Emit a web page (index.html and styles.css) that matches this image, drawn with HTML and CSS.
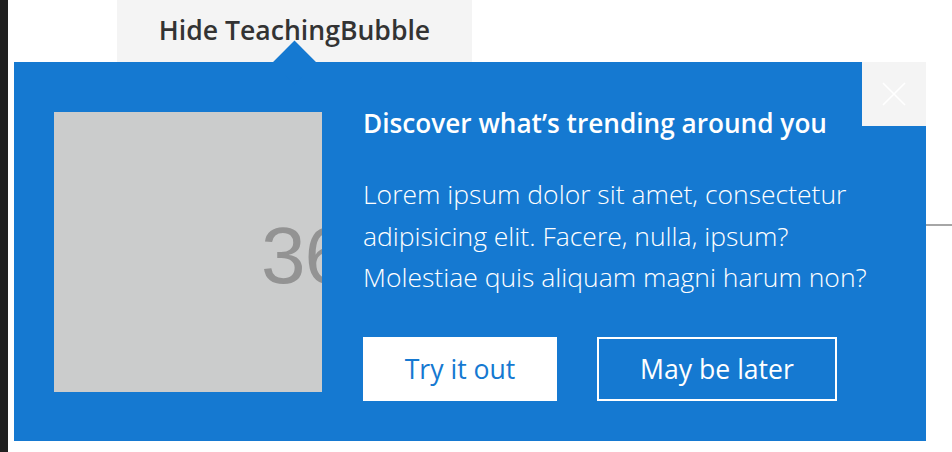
FILE: index.html
```html
<!DOCTYPE html>
<html lang="en">
  <head>
    <meta charset="UTF-8" />
    <meta name="viewport" content="width=device-width, initial-scale=1.0" />
    <title>TeachingBubble</title>
    <link rel="stylesheet" href="styles.css">
  </head>
  <body>
    <div class="page">
      <div class="sidebar"></div>
      <main class="main">
        <button class="toggle-btn">Hide TeachingBubble</button>
        <div class="content">
          <div class="rule"></div>
        </div>

        <div class="bubble">
          <div class="beak"></div>
          <button class="close-btn" aria-label="Close">
            <svg width="24" height="24" viewBox="0 0 24 24">
              <path d="M1 1 L23 23 M23 1 L1 23" stroke="#fff" stroke-width="1.6" fill="none" />
            </svg>
          </button>
          <div class="bubble-image">
            <span>36</span>
          </div>
          <div class="bubble-body">
            <h3 class="bubble-title">Discover what’s trending around you</h3>
            <p class="bubble-text">
              Lorem ipsum dolor sit amet, consectetur adipisicing elit. Facere,
              nulla, ipsum? Molestiae quis aliquam magni harum non?
            </p>
            <div class="bubble-actions">
              <button class="btn btn-primary">Try it out</button>
              <button class="btn btn-outline">May be later</button>
            </div>
          </div>
        </div>
      </main>
    </div>
  </body>
</html>
```

FILE: styles.css
```css
body {
  margin: 0;
  font-family: "Open Sans", "Noto Sans", sans-serif;
  background-color: #fff;
  overflow: hidden;
}

.page {
  display: flex;
  height: 452px;
}

.sidebar {
  width: 8px;
  background-color: #202020;
}

.main {
  flex: 1;
  position: relative;
}

.toggle-btn {
  display: block;
  margin-left: 109px;
  width: 355px;
  height: 62px;
  padding: 0 0 2px;
  border: none;
  background-color: #f4f4f4;
  color: #333;
  font-family: inherit;
  font-size: 26.6px;
  font-weight: 600;
}

.content {
  padding-top: 162px;
}

.rule {
  margin-left: 500px;
  height: 2px;
  background-color: #a6a6a6;
}

/* Bubble (callout, sits over the page) */

.bubble {
  position: absolute;
  top: 62px;
  left: 6px;
  width: 912px;
  height: 379px;
  box-sizing: border-box;
  padding: 40px;
  display: flex;
  align-items: center;
  gap: 41px;
  background-color: #1579d1;
  color: #fff;
}

.beak {
  position: absolute;
  top: -15px;
  left: 265px;
  width: 31px;
  height: 31px;
  background-color: #1579d1;
  transform: rotate(45deg);
}

.close-btn {
  position: absolute;
  top: 0;
  right: 0;
  width: 64px;
  height: 64px;
  padding: 0;
  border: none;
  background-color: #f4f4f4;
  display: flex;
  align-items: center;
  justify-content: center;
}

.bubble-image {
  position: relative;
  width: 268px;
  height: 280px;
  flex-shrink: 0;
  margin-top: 1px;
  background-color: #cbcccc;
  overflow: hidden;
}

.bubble-image span {
  position: absolute;
  left: 207px;
  top: 98px;
  font-family: "Liberation Sans", Arial, sans-serif;
  font-size: 80px;
  color: #939393;
  letter-spacing: -1px;
}

.bubble-body {
  align-self: stretch;
  display: flex;
  flex-direction: column;
}

.bubble-title {
  margin: 2px 0 0;
  font-size: 26.2px;
  font-weight: 600;
  line-height: 38px;
}

.bubble-text {
  margin: 32px 0 0;
  width: 530px;
  font-size: 26.5px;
  font-weight: 300;
  line-height: 41.5px;
}

.bubble-actions {
  margin-top: auto;
  display: flex;
  gap: 40px;
}

.btn {
  height: 64px;
  font-family: inherit;
  font-size: 26.6px;
  padding: 0;
}

.btn-primary {
  width: 194px;
  border: none;
  background-color: #fff;
  color: #1579d1;
}

.btn-outline {
  width: 240px;
  border: 2px solid #fff;
  background-color: transparent;
  color: #fff;
}
```
